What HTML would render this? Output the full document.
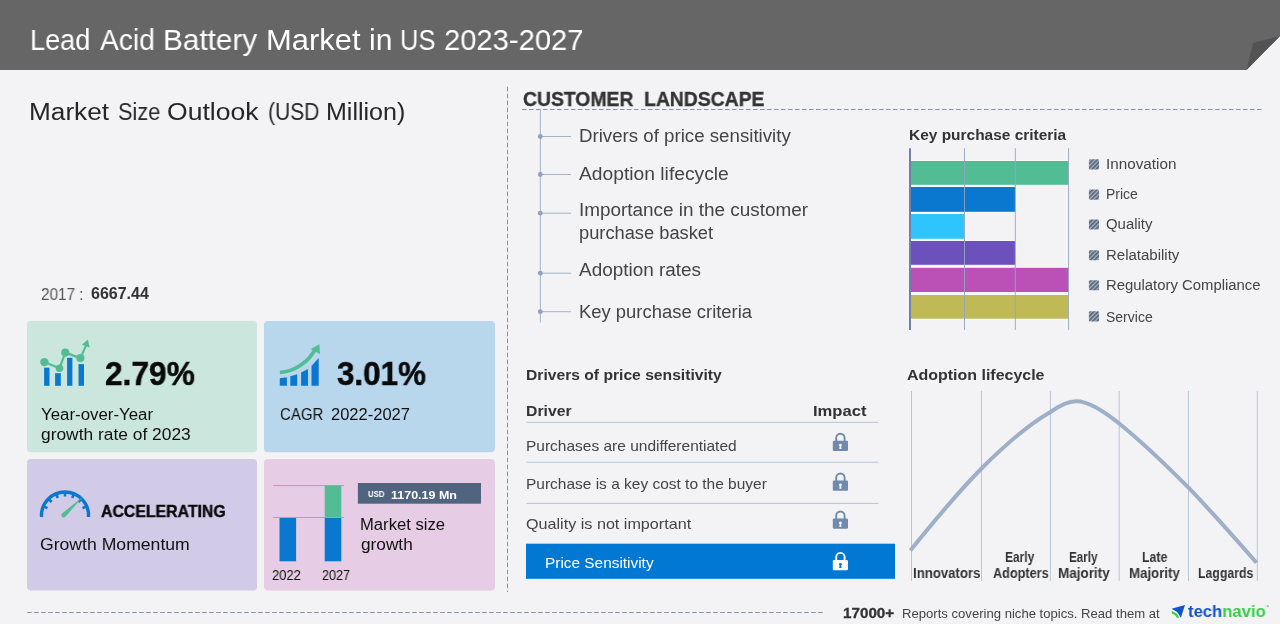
<!DOCTYPE html>
<html lang="en"><head><meta charset="utf-8"><title>Lead Acid Battery Market in US 2023-2027</title>
<style>
html,body{margin:0;padding:0;background:#f3f3f5;}
body{width:1280px;height:624px;overflow:hidden;font-family:"Liberation Sans",sans-serif;}
#page{position:relative;width:1280px;height:624px;background:#f3f3f5;overflow:hidden;}
#gfx{position:absolute;left:0;top:0;}
.t{position:absolute;line-height:0;white-space:nowrap;transform-origin:0 0;will-change:transform;}

</style></head>
<body>
<div id="page">
<svg id="gfx" width="1280" height="624" viewBox="0 0 1280 624">
<defs>
<pattern id="hatch" width="3" height="3" patternUnits="userSpaceOnUse" patternTransform="rotate(-45)">
<rect width="3" height="3" fill="#aab4c0"/><rect width="3" height="1.7" fill="#56657a"/>
</pattern>
<g id="lock">
<path d="M3.4 9.5V5.9a4.2 4.2 0 0 1 8.4 0V9.5" fill="none" stroke-width="1.9"/>
<rect x="0" y="8.7" width="15.2" height="10.3" rx="1.2" stroke="none"/>
</g>
<path id="keyhole" d="M7.6 11.7a1.45 1.45 0 0 1 .75 2.7l.45 2.5h-2.4l.45-2.5a1.45 1.45 0 0 1 .75-2.7z"/>
</defs>
<!-- header -->
<path d="M0 0H1280V36L1246.5 70H0Z" fill="#666666"/>
<path d="M1246.5 70L1253 43L1280 36Z" fill="#535353"/>
<!-- dashed separators -->
<line x1="507.5" y1="86.7" x2="507.5" y2="592" stroke="#7c92ae" stroke-width="1" stroke-dasharray="4.5 2.5"/>
<line x1="522" y1="109.5" x2="1262" y2="109.5" stroke="#7c92ae" stroke-width="1" stroke-dasharray="4.5 2.5"/>
<line x1="27.2" y1="612.5" x2="823" y2="612.5" stroke="#7c92ae" stroke-width="1" stroke-dasharray="4.5 2.5"/>
<!-- cards -->
<rect x="27" y="321" width="230" height="131.3" rx="4" fill="#cbe7dd"/>
<rect x="264" y="321" width="231" height="131.3" rx="4" fill="#b8d6ec"/>
<rect x="27" y="459" width="230" height="131.5" rx="4" fill="#d1cbe8"/>
<rect x="264" y="459" width="231" height="131.5" rx="4" fill="#e6cce4"/>
<!-- icon 1: bars + line -->
<g fill="#0b78d0">
<rect x="44.1" y="367.7" width="5.4" height="18.1"/>
<rect x="55.1" y="373.2" width="5.7" height="12.6"/>
<rect x="67.1" y="357.8" width="5.3" height="28"/>
<rect x="78.5" y="364.1" width="5.5" height="21.7"/>
</g>
<g fill="#52bd94" stroke="#52bd94">
<polyline points="44.4,362.1 59.5,368.2 65.3,352.6 80.4,358.1 86,345.6" fill="none" stroke-width="2.2" stroke-linejoin="round"/>
<circle cx="44.4" cy="362.1" r="4.2" stroke="none"/>
<circle cx="59.5" cy="368.2" r="3.8" stroke="none"/>
<circle cx="65.3" cy="352.6" r="4.1" stroke="none"/>
<circle cx="80.4" cy="358.1" r="4.1" stroke="none"/>
<path d="M87.9 339.6L81.8 344.8L89.6 347.6Z" stroke="none"/>
</g>
<!-- icon 2: rising bars + arrow -->
<g fill="#0b78d0">
<path d="M279.8 378.2L286.9 377.2V385.7H279.8Z"/>
<path d="M290.3 376.2L297.2 374.2V385.7H290.3Z"/>
<path d="M301.1 372.6L308 369V385.7H301.1Z"/>
<path d="M311.5 366L318.7 358V385.7H311.5Z"/>
</g>
<path d="M279.9 372.5C294 371.8 309 362 315.4 348.6" fill="none" stroke="#52bd94" stroke-width="3.6"/>
<path d="M319.4 344.2L320 354L310.6 349.2Z" fill="#52bd94"/>
<!-- icon 3: gauge -->
<path d="M41.55 517A23.5 23.5 0 1 1 88.45 517" fill="none" stroke="#0b78d0" stroke-width="3.4"/>
<g stroke="#0b78d0" stroke-width="2.6">
<line x1="85.79" y1="506.79" x2="82.46" y2="508.17"/>
<line x1="80.91" y1="499.49" x2="78.36" y2="502.04"/>
<line x1="73.61" y1="494.61" x2="72.23" y2="497.94"/>
<line x1="65.00" y1="492.90" x2="65.00" y2="496.50"/>
<line x1="56.39" y1="494.61" x2="57.77" y2="497.94"/>
<line x1="49.09" y1="499.49" x2="51.64" y2="502.04"/>
<line x1="44.21" y1="506.79" x2="47.54" y2="508.17"/>
</g>
<path d="M83.6 496L65.6 516.6A2.2 2.2 0 0 1 62 513.6Z" fill="#52bd94"/>
<!-- icon 4: market size bars -->
<line x1="273" y1="485.6" x2="344" y2="485.6" stroke="#9aa9bf" stroke-width="1"/>
<rect x="279.5" y="517.5" width="16.6" height="43.8" fill="#0b78d0"/>
<rect x="324.7" y="517.5" width="16.6" height="43.8" fill="#0b78d0"/>
<rect x="324.7" y="485.6" width="16.6" height="31.9" fill="#52bd94"/>
<line x1="273" y1="517.5" x2="344" y2="517.5" stroke="#9aa9bf" stroke-width="1"/>
<rect x="357.9" y="483" width="123.1" height="20.7" fill="#50647f"/>
<!-- customer landscape list -->
<g stroke="#a3b3c7" stroke-width="1" fill="#8fa2ba">
<line x1="540.3" y1="109.5" x2="540.3" y2="322.5"/>
<line x1="540.3" y1="136.5" x2="571" y2="136.5"/><circle cx="540.3" cy="136.5" r="2.4" stroke="none"/>
<line x1="540.3" y1="174.5" x2="571" y2="174.5"/><circle cx="540.3" cy="174.5" r="2.4" stroke="none"/>
<line x1="540.3" y1="213.2" x2="571" y2="213.2"/><circle cx="540.3" cy="213.2" r="2.4" stroke="none"/>
<line x1="540.3" y1="273.2" x2="571" y2="273.2"/><circle cx="540.3" cy="273.2" r="2.4" stroke="none"/>
<line x1="540.3" y1="311.7" x2="571" y2="311.7"/><circle cx="540.3" cy="311.7" r="2.4" stroke="none"/>
</g>
<!-- bar chart -->
<g stroke="#fbfbfc" stroke-width="2" paint-order="stroke">
<rect x="910.5" y="161" width="158.1" height="23.8" fill="#52bd94"/>
<rect x="910.5" y="187" width="104.8" height="24.8" fill="#0b78d0"/>
<rect x="910.5" y="214" width="53.9" height="24.8" fill="#2ec4fd"/>
<rect x="910.5" y="241" width="104.8" height="23.8" fill="#6c51bd"/>
<rect x="910.5" y="267.8" width="158.1" height="24.2" fill="#bb50b6"/>
<rect x="910.5" y="295" width="158.1" height="23.7" fill="#bfba55"/>
</g>
<g stroke="#94a6bf" stroke-width="1" opacity="0.9">
<line x1="964.5" y1="148.2" x2="964.5" y2="330"/>
<line x1="1015.3" y1="148.2" x2="1015.3" y2="330"/>
<line x1="1068.6" y1="148.2" x2="1068.6" y2="330"/>
</g>
<line x1="910" y1="148.2" x2="910" y2="330" stroke="#6d82a6" stroke-width="2"/>
<!-- legend -->
<g fill="url(#hatch)">
<rect x="1088.9" y="159.3" width="10.1" height="10.1" rx="1.2"/>
<rect x="1088.9" y="189.6" width="10.1" height="10.1" rx="1.2"/>
<rect x="1088.9" y="219.4" width="10.1" height="10.1" rx="1.2"/>
<rect x="1088.9" y="250.2" width="10.1" height="10.1" rx="1.2"/>
<rect x="1088.9" y="280.2" width="10.1" height="10.1" rx="1.2"/>
<rect x="1088.9" y="311.3" width="10.1" height="10.1" rx="1.2"/>
</g>
<!-- drivers table -->
<g stroke="#b5c3d6" stroke-width="1">
<line x1="526.6" y1="422.3" x2="878.5" y2="422.3"/>
<line x1="526.6" y1="462.2" x2="878.5" y2="462.2"/>
<line x1="526.6" y1="503.4" x2="878.5" y2="503.4"/>
</g>
<rect x="526" y="543.7" width="369" height="35.1" fill="#0078d4"/>
<g fill="#7189ac" stroke="#7189ac">
<use href="#lock" x="832.8" y="432"/>
<use href="#lock" x="832.8" y="471.8"/>
<use href="#lock" x="832.8" y="509.8"/>
</g>
<g fill="#ffffff" stroke="#ffffff"><use href="#lock" x="832.8" y="551.2"/></g>
<g fill="#f3f3f5">
<use href="#keyhole" x="832.8" y="432"/>
<use href="#keyhole" x="832.8" y="471.8"/>
<use href="#keyhole" x="832.8" y="509.8"/>
</g>
<use href="#keyhole" x="832.8" y="551.2" fill="#0078d4"/>
<!-- lifecycle chart -->
<g stroke="#b9c6d6" stroke-width="1">
<line x1="911.5" y1="391" x2="911.5" y2="581"/>
<line x1="981.5" y1="391" x2="981.5" y2="581"/>
<line x1="1050.4" y1="391" x2="1050.4" y2="581"/>
<line x1="1119.2" y1="391" x2="1119.2" y2="581"/>
<line x1="1188.5" y1="391" x2="1188.5" y2="581"/>
<line x1="1257.3" y1="391" x2="1257.3" y2="581"/>
</g>
<path d="M910.4 550.4C935 520 958 492 981.5 468.5C1005 445 1028 425 1050.4 412C1062 404 1070 401 1076 401.2C1085 401 1100 408 1119.2 423.5C1142 442 1165 464 1188.5 487.7C1212 512 1234 537 1256.5 562.7" fill="none" stroke="#9eb0c7" stroke-width="4" stroke-linejoin="round"/>
<!-- logo icon -->
<path d="M1185 604.9L1171.6 608.8L1177.2 611.9L1180.9 617.8Z" fill="#1353c6"/>
<path d="M1171.8 611L1176.4 613.2L1179.4 617.8L1176.8 617.8L1174.8 614.8L1171.8 613.4Z" fill="#35cf45"/>
</svg>

<div class="t" style="left:30.29px;top:40px;font-size:30px;font-weight:400;color:#ffffff;font-family:'Liberation Sans', sans-serif;transform:scaleX(0.9048);">Lead</div>
<div class="t" style="left:100.10px;top:40px;font-size:30px;font-weight:400;color:#ffffff;font-family:'Liberation Sans', sans-serif;transform:scaleX(0.9386);">Acid</div>
<div class="t" style="left:162.52px;top:40px;font-size:30px;font-weight:400;color:#ffffff;font-family:'Liberation Sans', sans-serif;transform:scaleX(0.9914);">Battery</div>
<div class="t" style="left:265.64px;top:40px;font-size:30px;font-weight:400;color:#ffffff;font-family:'Liberation Sans', sans-serif;transform:scaleX(1.0311);">Market</div>
<div class="t" style="left:368.70px;top:40px;font-size:30px;font-weight:400;color:#ffffff;font-family:'Liberation Sans', sans-serif;transform:scaleX(1.0000);">in</div>
<div class="t" style="left:399.90px;top:40px;font-size:30px;font-weight:400;color:#ffffff;font-family:'Liberation Sans', sans-serif;transform:scaleX(0.8513);">US</div>
<div class="t" style="left:443.53px;top:40px;font-size:30px;font-weight:400;color:#ffffff;font-family:'Liberation Sans', sans-serif;transform:scaleX(0.9723);">2023-2027</div>
<div class="t" style="left:29.32px;top:112px;font-size:23px;font-weight:400;color:#262626;font-family:'Liberation Sans', sans-serif;transform:scaleX(1.1391);">Market</div>
<div class="t" style="left:117.86px;top:112px;font-size:23px;font-weight:400;color:#262626;font-family:'Liberation Sans', sans-serif;transform:scaleX(0.9442);">Size</div>
<div class="t" style="left:167.35px;top:112px;font-size:23px;font-weight:400;color:#262626;font-family:'Liberation Sans', sans-serif;transform:scaleX(1.1538);">Outlook</div>
<div class="t" style="left:268.29px;top:112px;font-size:23px;font-weight:400;color:#262626;font-family:'Liberation Sans', sans-serif;transform:scaleX(0.9148);">(USD</div>
<div class="t" style="left:326.22px;top:112px;font-size:23px;font-weight:400;color:#262626;font-family:'Liberation Sans', sans-serif;transform:scaleX(1.0886);">Million)</div>
<div class="t" style="left:40.70px;top:295px;font-size:16px;font-weight:400;color:#555;font-family:'Liberation Sans', sans-serif;transform:scaleX(0.9558);">2017 :</div>
<div class="t" style="left:91.00px;top:294px;font-size:16px;font-weight:700;color:#333;font-family:'Liberation Sans', sans-serif;transform:scaleX(0.9931);">6667.44</div>
<div class="t" style="left:105.04px;top:374px;font-size:33px;font-weight:700;color:#0a0a0a;font-family:'Liberation Sans', sans-serif;transform:scaleX(0.9598);-webkit-text-stroke:0.5px #0a0a0a;">2.79%</div>
<div class="t" style="left:40.80px;top:415px;font-size:16px;font-weight:400;color:#111;font-family:'Liberation Sans', sans-serif;transform:scaleX(1.0523);">Year-over-Year</div>
<div class="t" style="left:40.80px;top:435px;font-size:16px;font-weight:400;color:#111;font-family:'Liberation Sans', sans-serif;transform:scaleX(1.0862);">growth rate of 2023</div>
<div class="t" style="left:336.90px;top:374px;font-size:33px;font-weight:700;color:#0a0a0a;font-family:'Liberation Sans', sans-serif;transform:scaleX(0.9505);-webkit-text-stroke:0.5px #0a0a0a;">3.01%</div>
<div class="t" style="left:280.09px;top:414px;font-size:16.5px;font-weight:400;color:#111;font-family:'Liberation Sans', sans-serif;transform:scaleX(0.9076);">CAGR</div>
<div class="t" style="left:331.30px;top:414px;font-size:16.5px;font-weight:400;color:#111;font-family:'Liberation Sans', sans-serif;transform:scaleX(0.9962);">2022-2027</div>
<div class="t" style="left:101.30px;top:511px;font-size:16.5px;font-weight:700;color:#0a0a0a;font-family:'Liberation Sans', sans-serif;transform:scaleX(0.9605);-webkit-text-stroke:0.4px #0a0a0a;">ACCELERATING</div>
<div class="t" style="left:40.03px;top:544px;font-size:16.5px;font-weight:400;color:#111;font-family:'Liberation Sans', sans-serif;transform:scaleX(1.0676);">Growth Momentum</div>
<div class="t" style="left:368.00px;top:494px;font-size:9px;font-weight:700;color:#fff;font-family:'Liberation Sans', sans-serif;transform:scaleX(0.8632);">USD</div>
<div class="t" style="left:391.20px;top:495px;font-size:11px;font-weight:700;color:#fff;font-family:'Liberation Sans', sans-serif;transform:scaleX(1.1345);">1170.19 Mn</div>
<div class="t" style="left:360.26px;top:525px;font-size:16px;font-weight:400;color:#111;font-family:'Liberation Sans', sans-serif;transform:scaleX(1.0395);">Market size</div>
<div class="t" style="left:361.30px;top:545px;font-size:16px;font-weight:400;color:#111;font-family:'Liberation Sans', sans-serif;transform:scaleX(1.0771);">growth</div>
<div class="t" style="left:272.10px;top:575px;font-size:14px;font-weight:400;color:#111;font-family:'Liberation Sans', sans-serif;transform:scaleX(0.9290);">2022</div>
<div class="t" style="left:322.40px;top:575px;font-size:14px;font-weight:400;color:#111;font-family:'Liberation Sans', sans-serif;transform:scaleX(0.9032);">2027</div>
<div class="t" style="left:522.90px;top:99px;font-size:20px;font-weight:700;color:#333;font-family:'Liberation Sans', sans-serif;transform:scaleX(0.9671);-webkit-text-stroke:0.35px #333;">CUSTOMER&nbsp; LANDSCAPE</div>
<div class="t" style="left:579.00px;top:136px;font-size:18px;font-weight:400;color:#444;font-family:'Liberation Sans', sans-serif;transform:scaleX(1.0377);">Drivers of price sensitivity</div>
<div class="t" style="left:579.00px;top:174px;font-size:18px;font-weight:400;color:#444;font-family:'Liberation Sans', sans-serif;transform:scaleX(1.0693);">Adoption lifecycle</div>
<div class="t" style="left:579.00px;top:210px;font-size:18px;font-weight:400;color:#444;font-family:'Liberation Sans', sans-serif;transform:scaleX(1.0505);">Importance in the customer</div>
<div class="t" style="left:579.00px;top:233px;font-size:18px;font-weight:400;color:#444;font-family:'Liberation Sans', sans-serif;transform:scaleX(1.0152);">purchase basket</div>
<div class="t" style="left:579.00px;top:270px;font-size:18px;font-weight:400;color:#444;font-family:'Liberation Sans', sans-serif;transform:scaleX(1.0517);">Adoption rates</div>
<div class="t" style="left:579.00px;top:312px;font-size:18px;font-weight:400;color:#444;font-family:'Liberation Sans', sans-serif;transform:scaleX(1.0237);">Key purchase criteria</div>
<div class="t" style="left:908.87px;top:135px;font-size:15px;font-weight:700;color:#333;font-family:'Liberation Sans', sans-serif;transform:scaleX(1.0303);">Key purchase criteria</div>
<div class="t" style="left:1105.60px;top:164px;font-size:14px;font-weight:400;color:#444;font-family:'Liberation Sans', sans-serif;transform:scaleX(1.0891);">Innovation</div>
<div class="t" style="left:1105.60px;top:194px;font-size:14px;font-weight:400;color:#444;font-family:'Liberation Sans', sans-serif;transform:scaleX(0.9875);">Price</div>
<div class="t" style="left:1105.60px;top:224px;font-size:14px;font-weight:400;color:#444;font-family:'Liberation Sans', sans-serif;transform:scaleX(1.0659);">Quality</div>
<div class="t" style="left:1105.60px;top:255px;font-size:14px;font-weight:400;color:#444;font-family:'Liberation Sans', sans-serif;transform:scaleX(1.0710);">Relatability</div>
<div class="t" style="left:1105.60px;top:285px;font-size:14px;font-weight:400;color:#444;font-family:'Liberation Sans', sans-serif;transform:scaleX(1.0621);">Regulatory Compliance</div>
<div class="t" style="left:1105.60px;top:317px;font-size:14px;font-weight:400;color:#444;font-family:'Liberation Sans', sans-serif;transform:scaleX(0.9979);">Service</div>
<div class="t" style="left:526.06px;top:375px;font-size:15px;font-weight:700;color:#333;font-family:'Liberation Sans', sans-serif;transform:scaleX(1.0433);">Drivers of price sensitivity</div>
<div class="t" style="left:526.05px;top:411px;font-size:15px;font-weight:700;color:#333;font-family:'Liberation Sans', sans-serif;transform:scaleX(1.0512);">Driver</div>
<div class="t" style="left:812.89px;top:411px;font-size:15px;font-weight:700;color:#333;font-family:'Liberation Sans', sans-serif;transform:scaleX(1.1064);">Impact</div>
<div class="t" style="left:525.90px;top:446px;font-size:15px;font-weight:400;color:#444;font-family:'Liberation Sans', sans-serif;transform:scaleX(1.0324);">Purchases are undifferentiated</div>
<div class="t" style="left:525.90px;top:484px;font-size:15px;font-weight:400;color:#444;font-family:'Liberation Sans', sans-serif;transform:scaleX(1.0316);">Purchase is a key cost to the buyer</div>
<div class="t" style="left:525.90px;top:524px;font-size:15px;font-weight:400;color:#444;font-family:'Liberation Sans', sans-serif;transform:scaleX(1.0766);">Quality is not important</div>
<div class="t" style="left:544.87px;top:563px;font-size:15px;font-weight:400;color:#fff;font-family:'Liberation Sans', sans-serif;transform:scaleX(1.0257);">Price Sensitivity</div>
<div class="t" style="left:906.90px;top:375px;font-size:15px;font-weight:700;color:#333;font-family:'Liberation Sans', sans-serif;transform:scaleX(1.0643);">Adoption lifecycle</div>
<div class="t" style="left:913.16px;top:573px;font-size:14px;font-weight:700;color:#333;font-family:'Liberation Sans', sans-serif;transform:scaleX(0.9429);">Innovators</div>
<div class="t" style="left:1004.74px;top:557px;font-size:14px;font-weight:700;color:#333;font-family:'Liberation Sans', sans-serif;transform:scaleX(0.8559);">Early</div>
<div class="t" style="left:992.80px;top:573px;font-size:14px;font-weight:700;color:#333;font-family:'Liberation Sans', sans-serif;transform:scaleX(0.9049);">Adopters</div>
<div class="t" style="left:1069.37px;top:557px;font-size:14px;font-weight:700;color:#333;font-family:'Liberation Sans', sans-serif;transform:scaleX(0.8324);">Early</div>
<div class="t" style="left:1057.84px;top:573px;font-size:14px;font-weight:700;color:#333;font-family:'Liberation Sans', sans-serif;transform:scaleX(0.9623);">Majority</div>
<div class="t" style="left:1142.12px;top:557px;font-size:14px;font-weight:700;color:#333;font-family:'Liberation Sans', sans-serif;transform:scaleX(0.8821);">Late</div>
<div class="t" style="left:1129.35px;top:573px;font-size:14px;font-weight:700;color:#333;font-family:'Liberation Sans', sans-serif;transform:scaleX(0.9453);">Majority</div>
<div class="t" style="left:1197.52px;top:573px;font-size:14px;font-weight:700;color:#333;font-family:'Liberation Sans', sans-serif;transform:scaleX(0.8774);">Laggards</div>
<div class="t" style="left:842.70px;top:613px;font-size:14px;font-weight:700;color:#333;font-family:'Liberation Sans', sans-serif;transform:scaleX(1.0872);-webkit-text-stroke:0.3px #333;">17000+</div>
<div class="t" style="left:901.69px;top:614px;font-size:13px;font-weight:400;color:#444;font-family:'Liberation Sans', sans-serif;transform:scaleX(1.0075);">Reports covering niche topics. Read them at</div>
<div class="t" style="left:1188.00px;top:612px;font-size:17px;font-weight:700;color:#1353c6;font-family:'Liberation Sans', sans-serif;transform:scaleX(0.9797);"><span style="color:#1353c6">tech</span><span style="color:#35cf45">navio</span></div>
<div class="t" style="left:1265.36px;top:607px;font-size:6px;font-weight:400;color:#35cf45;font-family:'Liberation Sans', sans-serif;transform:scaleX(0.6400);">™</div>
</div>
</body></html>
